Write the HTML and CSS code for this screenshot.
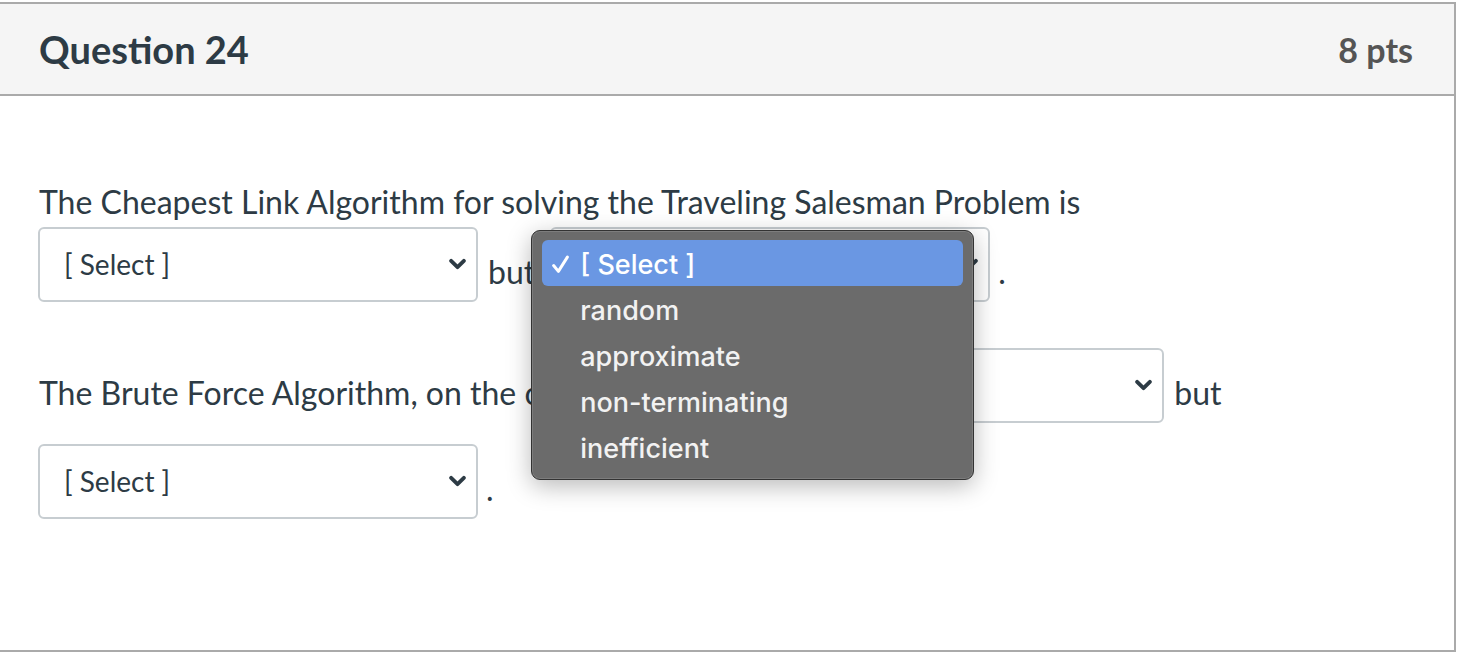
FILE: index.html
```
<!DOCTYPE html>
<html>
<head>
<meta charset="utf-8">
<link rel="stylesheet" href="styles.css">
</head>
<body>
<div class="card">
  <div class="card-header">
    <h2 class="q-title">Question 24</h2>
    <span class="q-pts">8 pts</span>
  </div>
  <div class="card-body">
    <div class="para">
      <div class="line text-line">The Cheapest Link Algorithm for solving the Traveling Salesman Problem is</div>
      <div class="line">
        <div class="select"><span class="sel-text">[ Select ]</span><svg class="chev" viewBox="0 0 16 10"><path d="M2 2 L8 8 L14 2" /></svg></div>
        <span class="word">but</span>
        <div class="select select-open"><span class="sel-text">[ Select ]</span><svg class="chev" viewBox="0 0 16 10"><path d="M2 2 L8 8 L14 2" /></svg>
          <div class="menu">
            <div class="opt opt-active"><svg class="check" viewBox="0 0 16 18"><polyline points="1.5,10 6,15.5 14.5,2" /></svg>[ Select ]</div>
            <div class="opt">random</div>
            <div class="opt">approximate</div>
            <div class="opt">non-terminating</div>
            <div class="opt">inefficient</div>
          </div>
        </div>
        <span class="word dot">.</span>
      </div>
    </div>
    <div class="para para2">
      <div class="line">
        <span class="word first">The Brute Force Algorithm, on the other hand, is</span>
        <div class="select"><span class="sel-text">[ Select ]</span><svg class="chev" viewBox="0 0 16 10"><path d="M2 2 L8 8 L14 2" /></svg></div>
        <span class="word">but</span>
      </div>
      <div class="line line3">
        <div class="select"><span class="sel-text">[ Select ]</span><svg class="chev" viewBox="0 0 16 10"><path d="M2 2 L8 8 L14 2" /></svg></div>
        <span class="word dot">.</span>
      </div>
    </div>
  </div>
</div>
</body>
</html>
```
FILE: styles.css
```
* { box-sizing: border-box; }
html, body { margin: 0; padding: 0; background: #fff; }
body { font-family: Lato, "Liberation Sans", sans-serif; color: #2d3b45; }

.card {
  margin-top: 2px;
  width: 1456px;
  height: 650px;
  border: 2px solid #aaaaaa;
  border-left: none;
  display: flex;
  flex-direction: column;
}
.card-header {
  height: 92px;
  background: #f5f5f5;
  border-bottom: 2px solid #aaaaaa;
  display: flex;
  align-items: center;
  justify-content: space-between;
  padding: 0 41px 0 39px;
}
.q-title {
  margin: 0;
  font-size: 38px;
  font-weight: 700;
  color: #2d3b45;
}
.q-pts {
  font-size: 34px;
  font-weight: 700;
  color: #555555;
}
.card-body {
  flex: 1;
  padding: 86px 0 0 38px;
}
.line {
  display: flex;
  align-items: flex-end;
  gap: 10px;
  font-size: 32px;
}
.text-line {
  padding-left: 1px;
  line-height: 40px;
  height: 40px;
  margin-bottom: 5px;
}
.word {
  line-height: 32px;
  padding-bottom: 14px;
}
.word.first { padding-left: 1px; }
.dot { margin-left: -2px; }
.para2 { margin-top: 46px; }
.line3 { margin-top: 21px; }

.select {
  position: relative;
  width: 440px;
  height: 75px;
  border: 2px solid #c7cdd1;
  border-radius: 6px;
  background: #fff;
  display: flex;
  align-items: center;
  justify-content: space-between;
  padding: 0 10px 0 24px;
  flex-shrink: 0;
}
.select-open { margin-left: 5px; }
.sel-text {
  font-size: 28px;
  color: #2d3b45;
  padding-bottom: 2px;
}
.chev {
  width: 17px;
  height: 12px;
  margin-bottom: 2px;
}
.chev path {
  fill: none;
  stroke: #2d3b45;
  stroke-width: 3.6;
  stroke-linecap: round;
  stroke-linejoin: round;
}

.menu {
  position: absolute;
  left: -21px;
  top: 1px;
  width: 443px;
  padding: 9px 10px;
  background: #6b6b6b;
  border: 1px solid #333;
  border-radius: 9px;
  box-shadow: 0 6px 24px rgba(0,0,0,0.28), inset 0 0 0 1px rgba(255,255,255,0.12);
  font-family: Inter, "Open Sans", sans-serif;
  z-index: 5;
}
.opt {
  height: 46px;
  line-height: 42px;
  padding-top: 4px;
  padding-left: 38px;
  color: #f2f2f2;
  font-size: 27px;
  font-weight: 500;
  position: relative;
}
.opt-active {
  background: #6a97e3;
  border-radius: 6px;
  color: #fff;
}
.check {
  position: absolute;
  left: 10px;
  top: 15px;
  width: 17px;
  height: 19px;
}
.check polyline {
  fill: none;
  stroke: #fff;
  stroke-width: 2.8;
  stroke-linecap: round;
  stroke-linejoin: round;
}
```
